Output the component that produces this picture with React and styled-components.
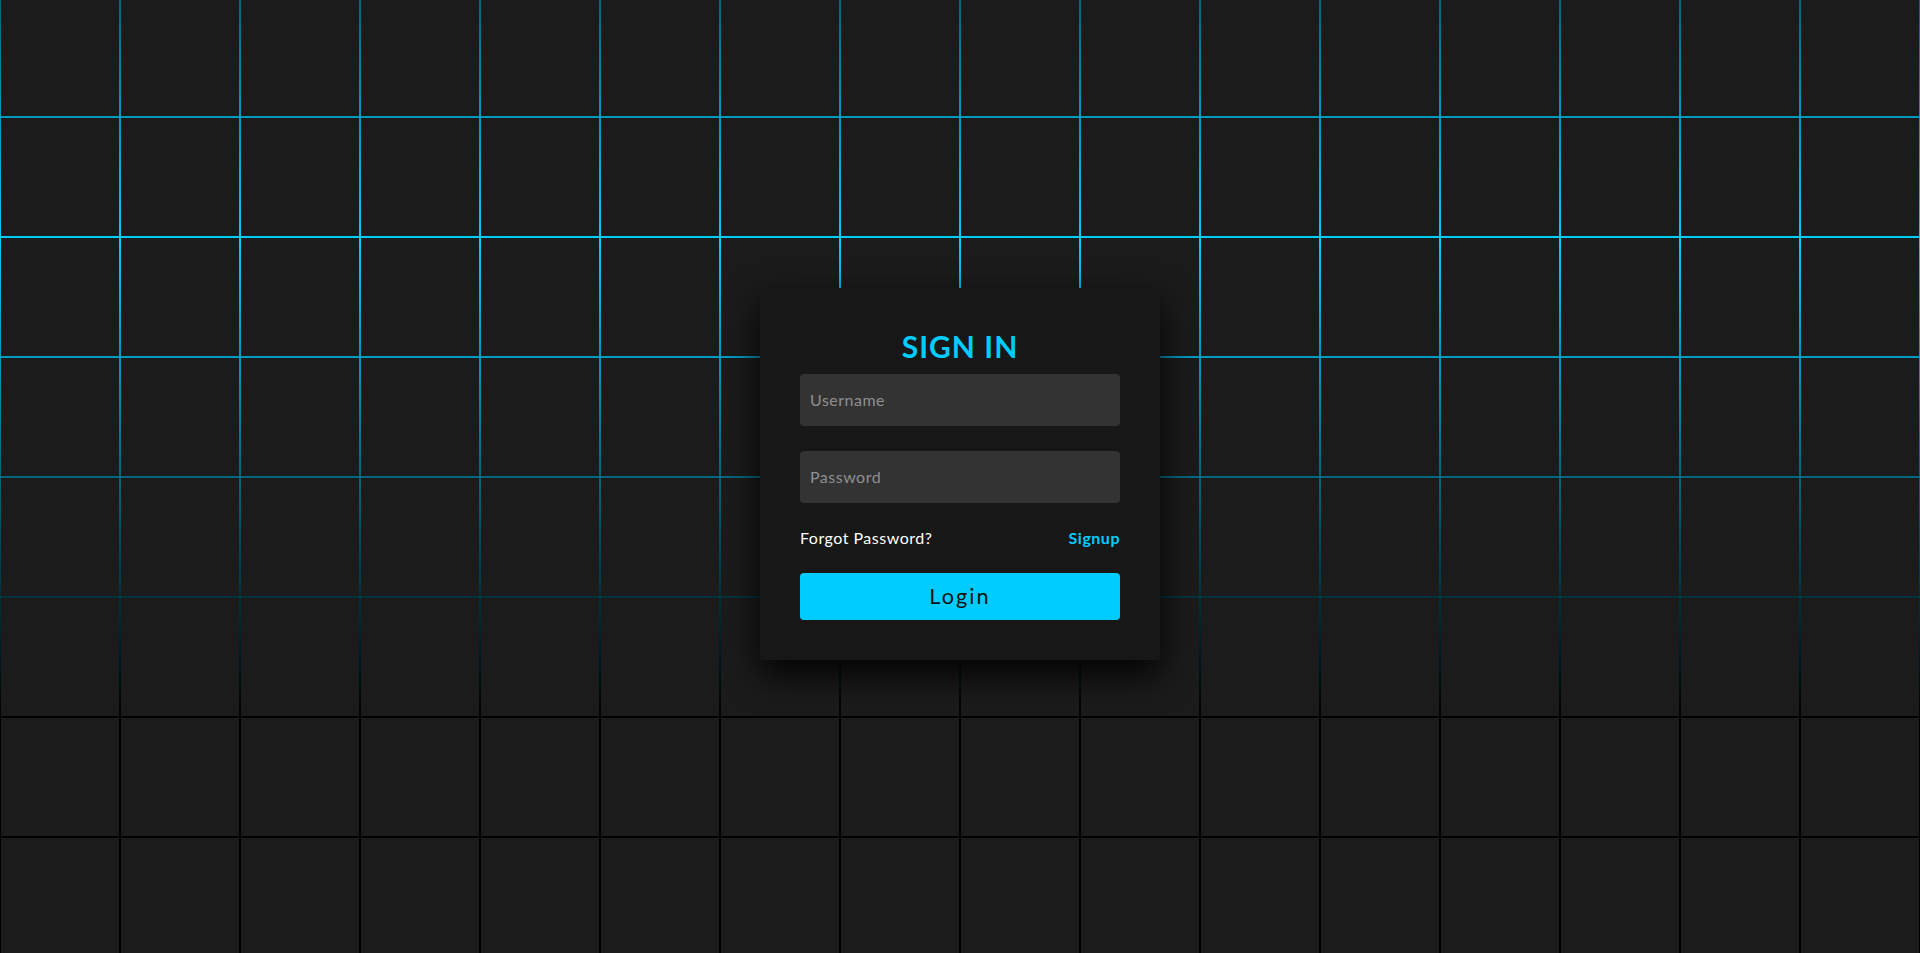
import React from 'react';
import styled, { createGlobalStyle } from 'styled-components';

const GlobalStyle = createGlobalStyle`
    * {
        box-sizing: border-box;
    }
    body {
        margin: 0;
        background: #000;
        overflow: hidden;
        font-family: Lato, "Noto Sans", sans-serif;
    }
`;

const CELLS = Array.from({ length: 160 }, (_, i) => i);

const App = () => {
    return (
        <>
            <GlobalStyle />
            <Section>
                {CELLS.map((i) => <Cell key={i} />)}
                <Signin>
                    <Title>Sign in</Title>
                    <Form>
                        <Input type="text" placeholder="Username" />
                        <Input type="password" placeholder="Password" />
                        <Links>
                            <LinkText href="#">Forgot Password?</LinkText>
                            <LinkText href="#" accent>Signup</LinkText>
                        </Links>
                        <Submit type="button">Login</Submit>
                    </Form>
                </Signin>
            </Section>
        </>
    )
}

export default App;

const Section = styled.section`
    position: relative;
    width: 100vw;
    height: 100vh;
    display: flex;
    flex-wrap: wrap;
    justify-content: center;
    align-content: center;
    gap: 2px;
    overflow: hidden;
    background: linear-gradient(
        to bottom,
        #00667f 0px,
        #00ccff 239px,
        #000 716px,
        #000 100%
    );
`;

const Cell = styled.span`
    display: block;
    flex: 0 0 118px;
    width: 118px;
    height: 118px;
    background: #1b1b1b;
`;

const Signin = styled.div`
    position: absolute;
    top: 50%;
    left: 50%;
    transform: translate(-50%, -50%);
    margin-top: -3px;
    width: 400px;
    padding: 40px;
    display: flex;
    flex-direction: column;
    background: #171717;
    border-radius: 4px;
    box-shadow: 0 15px 35px rgba(0, 0, 0, .9);
`;

const Title = styled.h2`
    margin: 0 0 10px;
    font-size: 30px;
    line-height: 36px;
    font-weight: 700;
    letter-spacing: 1px;
    text-align: center;
    text-transform: uppercase;
    color: #00ccff;
`;

const Form = styled.div`
    display: flex;
    flex-direction: column;
    gap: 25px;
`;

const Input = styled.input`
    width: 100%;
    height: 52px;
    padding: 0 10px;
    border: none;
    outline: none;
    border-radius: 4px;
    background: #333;
    color: #fff;
    font-family: inherit;
    font-size: 16px;
    letter-spacing: .5px;

    &::placeholder {
        color: #8f8f8f;
    }
`;

const Links = styled.div`
    display: flex;
    justify-content: space-between;
    align-items: center;
    height: 20px;
`;

const LinkText = styled.a`
    color: ${(p) => (p.accent ? '#00ccff' : '#fff')};
    font-weight: ${(p) => (p.accent ? 700 : 400)};
    font-size: 16px;
    line-height: 20px;
    letter-spacing: .5px;
    text-decoration: none;
`;

const Submit = styled.button`
    height: 47px;
    border: none;
    border-radius: 4px;
    background: #00ccff;
    color: #111;
    font-family: inherit;
    font-size: 21.6px;
    letter-spacing: 2.1px;
    cursor: pointer;
`;
